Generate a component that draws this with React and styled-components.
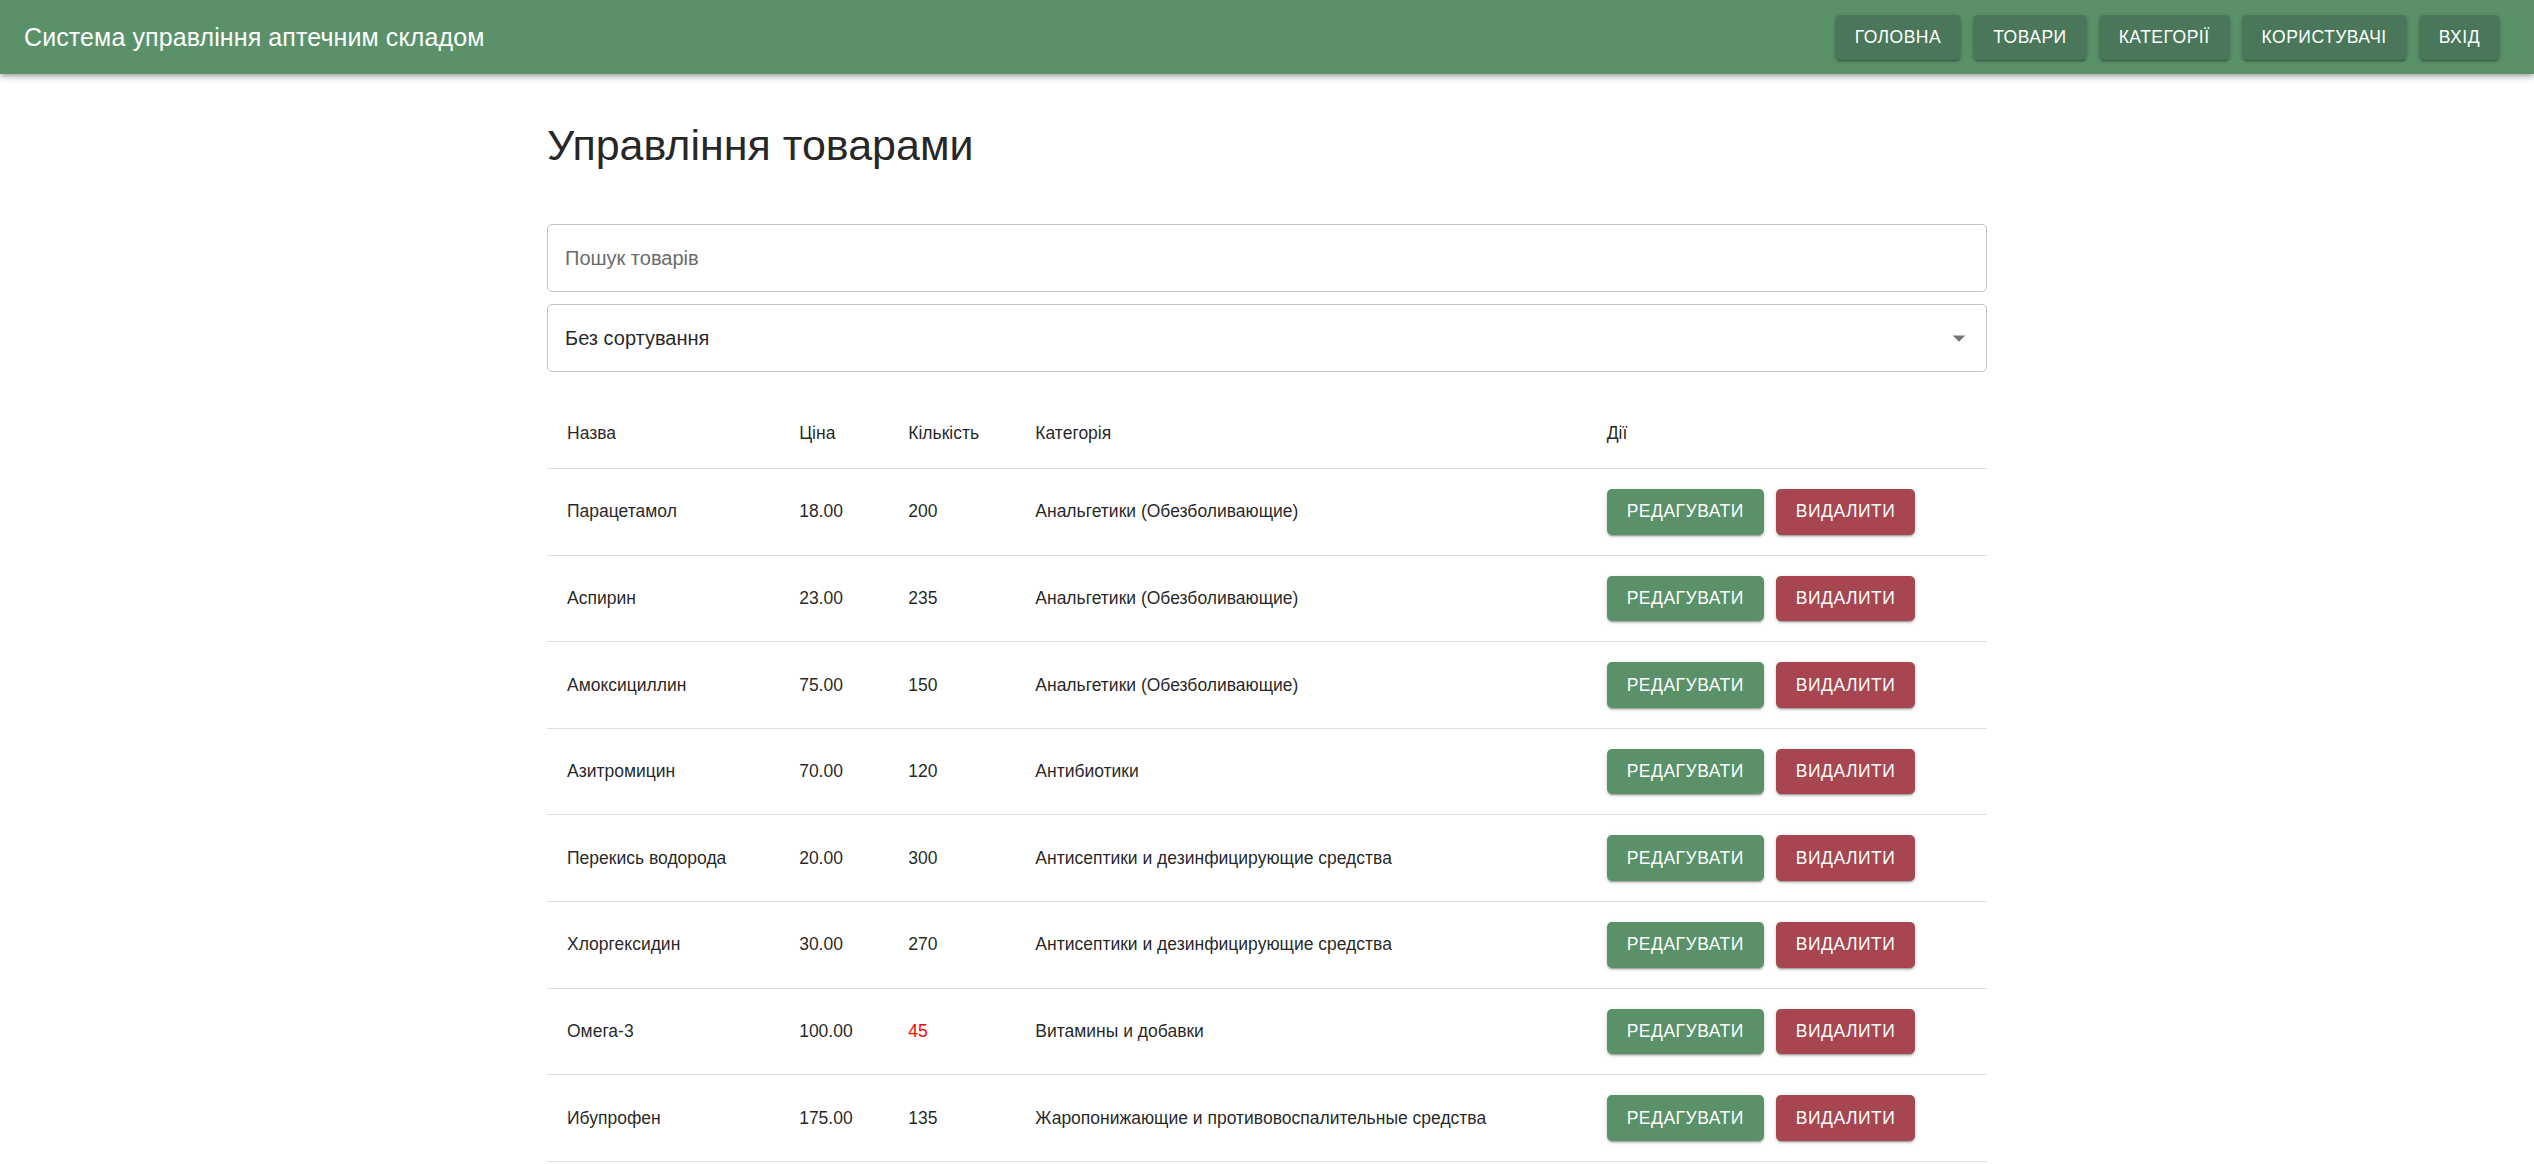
import React from 'react'
import styled, { createGlobalStyle } from 'styled-components'

const GlobalStyle = createGlobalStyle`
    body {
        margin: 0;
        background: #fff;
        font-family: "Liberation Sans", Arial, sans-serif;
        color: rgba(0, 0, 0, 0.87);
    }
`

const products = [
    { name: 'Парацетамол', price: '18.00', qty: 200, category: 'Анальгетики (Обезболивающие)' },
    { name: 'Аспирин', price: '23.00', qty: 235, category: 'Анальгетики (Обезболивающие)' },
    { name: 'Амоксициллин', price: '75.00', qty: 150, category: 'Анальгетики (Обезболивающие)' },
    { name: 'Азитромицин', price: '70.00', qty: 120, category: 'Антибиотики' },
    { name: 'Перекись водорода', price: '20.00', qty: 300, category: 'Антисептики и дезинфицирующие средства' },
    { name: 'Хлоргексидин', price: '30.00', qty: 270, category: 'Антисептики и дезинфицирующие средства' },
    { name: 'Омега-3', price: '100.00', qty: 45, category: 'Витамины и добавки' },
    { name: 'Ибупрофен', price: '175.00', qty: 135, category: 'Жаропонижающие и противовоспалительные средства' },
]

const navItems = ['Головна', 'Товари', 'Категорії', 'Користувачі', 'Вхід']

const columns = [
    { title: 'Назва', width: 232 },
    { title: 'Ціна', width: 109 },
    { title: 'Кількість', width: 127 },
    { title: 'Категорія', width: 571 },
    { title: 'Дії', width: 400 },
]

const App = () => {
    return (
        <>
            <GlobalStyle />
            <AppBar>
                <Brand>Система управління аптечним складом</Brand>
                <Nav>
                    {navItems.map(item => (
                        <NavButton key={item}>{item}</NavButton>
                    ))}
                </Nav>
            </AppBar>
            <Container>
                <Title>Управління товарами</Title>
                <Field>
                    <SearchInput placeholder="Пошук товарів" />
                </Field>
                <SelectField>
                    <span>Без сортування</span>
                    <Arrow viewBox="0 0 24 24">
                        <path d="M7 10l5 5 5-5z" />
                    </Arrow>
                </SelectField>
                <Table>
                    <colgroup>
                        {columns.map(c => (
                            <col key={c.title} style={{ width: c.width }} />
                        ))}
                    </colgroup>
                    <thead>
                        <tr>
                            {columns.map(c => (
                                <HeadCell key={c.title}>{c.title}</HeadCell>
                            ))}
                        </tr>
                    </thead>
                    <tbody>
                        {products.map(p => (
                            <tr key={p.name}>
                                <Cell>{p.name}</Cell>
                                <Cell>{p.price}</Cell>
                                <Cell $low={p.qty < 50}>{p.qty}</Cell>
                                <Cell>{p.category}</Cell>
                                <Cell>
                                    <ActionButton $variant="edit">Редагувати</ActionButton>
                                    <ActionButton $variant="delete">Видалити</ActionButton>
                                </Cell>
                            </tr>
                        ))}
                    </tbody>
                </Table>
            </Container>
        </>
    )
}

export default App

const AppBar = styled.header`
    display: flex;
    align-items: center;
    justify-content: space-between;
    height: 74px;
    padding: 0 34px 0 24px;
    background: #5a9169;
    box-shadow: 0 2px 4px -1px rgba(0,0,0,.2), 0 4px 5px 0 rgba(0,0,0,.14), 0 1px 10px 0 rgba(0,0,0,.12);
    position: relative;
    z-index: 1;
`

const Brand = styled.div`
    color: #fff;
    font-size: 25px;
    font-weight: 400;
    letter-spacing: 0.1px;
`

const Nav = styled.nav`
    display: flex;
    gap: 12px;
`

const NavButton = styled.button`
    height: 45px;
    padding: 0 20px;
    border: none;
    border-radius: 5px;
    background: #4a775a;
    color: #fff;
    font-family: inherit;
    font-size: 17.5px;
    font-weight: 500;
    letter-spacing: 0.5px;
    text-transform: uppercase;
    box-shadow: 0 3px 1px -2px rgba(0,0,0,.2), 0 2px 2px 0 rgba(0,0,0,.14), 0 1px 5px 0 rgba(0,0,0,.12);
`

const Container = styled.main`
    width: 1440px;
    margin: 0 auto;
    padding-top: 45px;
`

const Title = styled.h1`
    margin: 0 0 52px;
    font-size: 43px;
    font-weight: 400;
    line-height: 1.235;
    color: rgba(0, 0, 0, 0.87);
`

const Field = styled.div`
    height: 68px;
    box-sizing: border-box;
    border: 1px solid #c4c4c4;
    border-radius: 5px;
    display: flex;
    align-items: center;
    padding: 0 17px;
`

const SearchInput = styled.input`
    border: none;
    outline: none;
    width: 100%;
    font-family: inherit;
    font-size: 20px;
    color: rgba(0, 0, 0, 0.87);
    padding: 0;
    &::placeholder {
        color: #6b6b6b;
    }
`

const SelectField = styled(Field)`
    margin-top: 12px;
    justify-content: space-between;
    padding-right: 12px;
    font-size: 20px;
`

const Arrow = styled.svg`
    width: 30px;
    height: 30px;
    fill: #757575;
`

const Table = styled.table`
    margin-top: 26px;
    width: 100%;
    border-collapse: collapse;
    table-layout: fixed;
`

const HeadCell = styled.th`
    text-align: left;
    font-weight: 400;
    font-size: 17.5px;
    line-height: 30px;
    padding: 20px;
    border-bottom: 1px solid #e0e0e0;
    color: rgba(0, 0, 0, 0.87);
`

const Cell = styled.td`
    font-size: 17.5px;
    line-height: 25px;
    height: 45.6px;
    padding: 20px;
    border-bottom: 1px solid #e0e0e0;
    color: ${p => (p.$low ? '#ff0000' : 'rgba(0, 0, 0, 0.87)')};
    white-space: nowrap;
`

const ActionButton = styled.button`
    height: 45.6px;
    padding: 0 20px;
    margin-right: 12px;
    border: none;
    border-radius: 5px;
    vertical-align: middle;
    background: ${p => (p.$variant === 'delete' ? '#a74551' : '#5a9169')};
    color: #fff;
    font-family: inherit;
    font-size: 17.5px;
    font-weight: 500;
    letter-spacing: 0.5px;
    text-transform: uppercase;
    box-shadow: 0 3px 1px -2px rgba(0,0,0,.2), 0 2px 2px 0 rgba(0,0,0,.14), 0 1px 5px 0 rgba(0,0,0,.12);
`
